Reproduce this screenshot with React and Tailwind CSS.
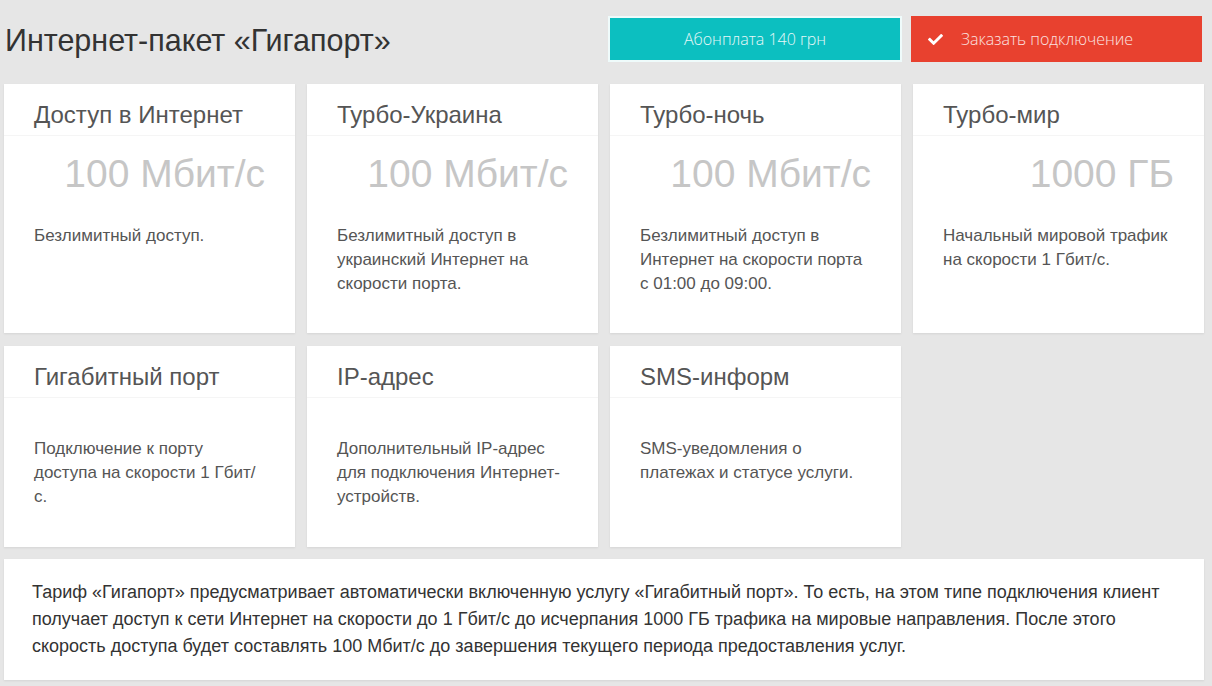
import { FaCheck } from 'react-icons/fa'

const topCards = [
    { title: 'Доступ в Интернет', value: '100 Мбит/с', text: 'Безлимитный доступ.' },
    { title: 'Турбо-Украина', value: '100 Мбит/с', text: 'Безлимитный доступ в украинский Интернет на скорости порта.' },
    { title: 'Турбо-ночь', value: '100 Мбит/с', text: 'Безлимитный доступ в Интернет на скорости порта с 01:00 до 09:00.' },
    { title: 'Турбо-мир', value: '1000 ГБ', text: 'Начальный мировой трафик на скорости 1 Гбит/с.' },
]

const bottomCards = [
    { title: 'Гигабитный порт', text: 'Подключение к порту доступа на скорости 1 Гбит/с.' },
    { title: 'IP-адрес', text: 'Дополнительный IP-адрес для подключения Интернет-устройств.' },
    { title: 'SMS-информ', text: 'SMS-уведомления о платежах и статусе услуги.' },
]

function Card({ title, value, text }) {
    return (
        <div className={"bg-white shadow-[0_1px_2px_rgba(0,0,0,0.08)] " + (value ? "h-[249px]" : "h-[201px]")}>
            <div className="h-[52px] pt-[16px] px-[30px] border-b border-[#f5f5f5]">
                <p className="text-[24px] leading-[30px] text-[#555]">{title}</p>
            </div>
            {value && (
                <p className="mt-[16px] pr-[30px] text-right text-[39px] leading-[44px] text-[#c6c6c6]">{value}</p>
            )}
            <p className={"px-[30px] text-[17px] leading-[24px] text-[#555] " + (value ? "mt-[28px]" : "mt-[39px]")}>{text}</p>
        </div>
    )
}

export default function App() {
    return (
        <div className="w-[1212px] h-[686px] bg-[#e6e6e6] pl-[4px] pr-[8px] font-['Liberation_Sans',Arial,sans-serif]">
            <div className="h-[84px] flex items-start">
                <h1 className="mt-[22px] ml-[1px] text-[30.5px] leading-[36px] text-[#333] flex-1">Интернет-пакет «Гигапорт»</h1>
                <div className="mt-[16px] mr-[2px] flex gap-[9px]">
                    <button className="w-[294px] h-[46px] bg-[#0cbfc0] border-2 border-[#effbfb] text-[#e6f8f8] text-[16px] font-light font-['Open_Sans',sans-serif]">
                        Абонплата 140 грн
                    </button>
                    <button className="w-[291px] h-[46px] bg-[#e8412f] text-[#fbe3e0] text-[16px] font-light font-['Open_Sans',sans-serif] flex items-center pl-[17px]">
                        <FaCheck className="text-white text-[15px]" />
                        <span className="ml-[18px]">Заказать подключение</span>
                    </button>
                </div>
            </div>

            <div className="grid grid-cols-4 gap-x-[12px] gap-y-[13px]">
                {topCards.map((c) => <Card key={c.title} {...c} />)}
                {bottomCards.map((c) => <Card key={c.title} {...c} />)}
            </div>

            <div className="mt-[12px] h-[121px] bg-white shadow-[0_1px_2px_rgba(0,0,0,0.08)] pl-[28px] pr-[22px] pt-[20px]">
                <p className="text-[18px] leading-[27px] text-[#333]">
                    Тариф «Гигапорт» предусматривает автоматически включенную услугу «Гигабитный порт». То есть, на этом типе подключения клиент получает доступ к сети Интернет на скорости до 1 Гбит/с до исчерпания 1000 ГБ трафика на мировые направления. После этого скорость доступа будет составлять 100 Мбит/с до завершения текущего периода предоставления услуг.
                </p>
            </div>
        </div>
    )
}
